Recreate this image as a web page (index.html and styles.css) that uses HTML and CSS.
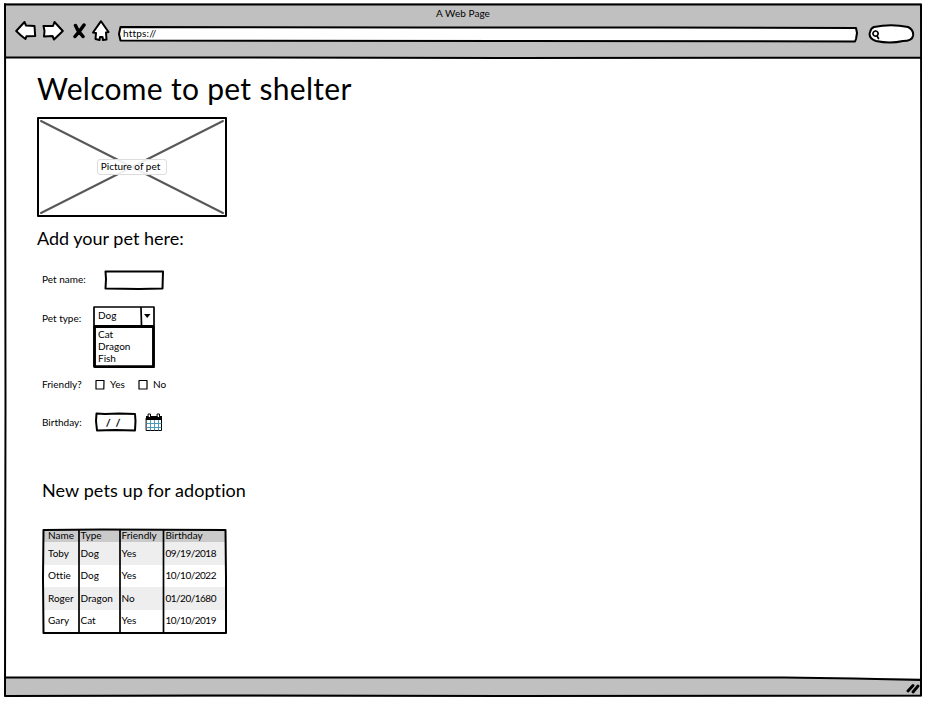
FILE: index.html
```html
<!DOCTYPE html>
<html lang="en">
<head>
<meta charset="utf-8">
<title>A Web Page</title>
<link rel="stylesheet" href="styles.css">
</head>
<body>
<div class="window">
  <svg class="frame" viewBox="0 0 918 694"><path d="M1 1.500L917 1.500L917.500 300L917 692.500L500 693L200 692.500L1 693L1.500 400L1 1M1 54.500L180 54.500L500 55L917 54.500M1 674.500L780 674.500L850 675.500L917 677"/></svg>
  <header class="chrome">
    <div class="title">A Web Page</div>
    <div class="toolbar">
      <svg class="icon back" viewBox="0 0 22 20"><path d="M1.200 10L9.500 1L11 4.500L19.500 5L20.200 15L11.500 15.200L10.500 18L6 14.500Z"/></svg>
      <svg class="icon forward" viewBox="0 0 22 20"><path d="M1.500 5L11 5L12.500 1L20.800 10L12 18.500L10.500 15L2 15.500L2.500 10Z"/></svg>
      <svg class="icon stop" viewBox="0 0 14 16"><path d="M3.500 2.500L6 7.500L11 13.500M12 2L8 7.500L3 13.500"/></svg>
      <svg class="icon home" viewBox="0 0 18 22"><path d="M9 1.200L16.500 12L14 12.500L14.500 19.500L11 20L10.500 17L8 17L7.500 20L3.500 19L4 13L1 12.500Z"/></svg>
      <div class="address">
        <svg class="frame" viewBox="0 0 740 20"><path fill="#fff" d="M2.500 3L300 3.500L540 3.500L738 4L739 9L738 15L737 17.500L400 17L2.500 16.500L1 10Z"/></svg>
        <span class="url">https://</span>
      </div>
      <div class="search">
        <svg class="frame" viewBox="0 0 48 20"><path fill="#fff" d="M6 3Q23-.5 40 3Q46 6 45 12Q44 17 35 17Q22 20 8 17Q0 14 2 8Q3 4 6 3Z"/><path class="lens" d="M7.500 7A2.600 2.600 0 1 0 7.600 7M9 12L10.500 14.500"/></svg>
      </div>
    </div>
  </header>
  <main class="content">
    <h1 class="heading">Welcome to pet shelter</h1>
    <figure class="picture">
      <svg class="frame" viewBox="0 0 190 100"><path d="M1 1H189V99H1Z"/><path class="cross" d="M4 4L186 96M186 4L4 96"/></svg>
      <figcaption class="caption">Picture of pet</figcaption>
    </figure>
    <h2 class="subheading add">Add your pet here:</h2>
    <form class="form">
      <div class="field name-field">
        <span class="label w-name">Pet name:</span>
        <div class="box name-box"><svg class="frame" viewBox="0 0 60 20"><path d="M1.500 1.500L30 1.500L59 1.500L58.500 18.500L35 19L1.500 18.500L2 9Z"/></svg></div>
      </div>
      <div class="field type-field">
        <span class="label w-type">Pet type:</span>
        <div class="select">
          <svg class="frame" viewBox="0 0 62 62"><path class="thin" d="M1 1H61V19.500M1 1V19.500M48 1.500L48.500 19"/><path class="ink" d="M51 8H57.500L54.200 12Z"/><path class="thick" d="M1.500 20.500H60.500V60.800L1.500 60.500Z"/></svg>
          <div class="selected">Dog</div>
          <ul class="options"><li>Cat</li><li>Dragon</li><li>Fish</li></ul>
        </div>
      </div>
      <div class="field friendly-field">
        <span class="label w-friendly">Friendly?</span>
        <svg class="check yes-check" viewBox="0 0 10 11"><path d="M1 1.500H9L8.800 10H1Z"/></svg><span class="yes">Yes</span>
        <svg class="check no-check" viewBox="0 0 10 11"><path d="M1 1.500H9V10H1Z"/></svg><span class="no">No</span>
      </div>
      <div class="field birthday-field">
        <span class="label w-birthday">Birthday:</span>
        <div class="box date-box"><svg class="frame" viewBox="0 0 42 20"><path d="M1.500 1.500L10 2L24 1.500L40 2L40.500 9L40 18.500L20 18L2 18.500L1 9Z"/></svg><span class="date">/&nbsp; /</span></div>
        <svg class="calendar" viewBox="0 0 18 19"><path fill="#fff" stroke="#000" stroke-width="1" d="M1.500 5H16.500V17.500H1.500Z"/><path d="M1 3H17V7H1Z"/><path class="grid" d="M5.500 7.500V17M9.500 7.500V17M13.500 7.500V17M2 10.500H16M2 14.500H16"/><path fill="#fff" stroke="#000" stroke-width="1" d="M3.500 1H5.500V4.500H3.500ZM12.500 1H14.500V4.500H12.500Z"/></svg>
      </div>
    </form>
    <h2 class="subheading adopt">New pets up for adoption</h2>
    <div class="pets">
      <table>
        <colgroup><col class="c-name"><col class="c-type"><col class="c-friendly"><col class="c-birthday"></colgroup>
        <thead><tr><th>Name</th><th>Type</th><th>Friendly</th><th>Birthday</th></tr></thead>
        <tbody>
          <tr><td>Toby</td><td>Dog</td><td>Yes</td><td class="day">09/19/2018</td></tr>
          <tr><td>Ottie</td><td>Dog</td><td>Yes</td><td class="day">10/10/2022</td></tr>
          <tr><td>Roger</td><td>Dragon</td><td>No</td><td class="day">01/20/1680</td></tr>
          <tr><td>Gary</td><td>Cat</td><td>Yes</td><td class="day">10/10/2019</td></tr>
        </tbody>
      </table>
      <svg class="frame" viewBox="0 0 185 106"><path d="M1.500 2L60 1.500L183.500 2L184 50V105L100 105L1.500 105L1 50Z"/><path class="thin" d="M37 2V104M78 2V104M121.500 2V104"/></svg>
    </div>
  </main>
  <footer class="status"><svg class="grip" viewBox="0 0 14 12"><path d="M2 9L7 3.500M7 10L12 4"/></svg></footer>
</div>
</body>
</html>
```

FILE: styles.css
```css
* { box-sizing: border-box; }
body {
  margin: 0;
  padding: 3px 0 0 4px;
  background: #fff;
  color: #000;
  font: 10px/12px Lato, "Liberation Sans", sans-serif;
  font-variant-ligatures: none;
}
svg { display: block; flex: none; fill: none; stroke: #000; stroke-width: 2; stroke-linejoin: round; stroke-linecap: round; }
.frame { position: absolute; left: 0; top: 0; width: 100%; height: 100%; pointer-events: none; }
.window { position: relative; width: 918px; height: 694px; display: flex; flex-direction: column; }
.chrome { height: 55px; background: #c0c0c0; padding-top: 4px; }
.title { text-align: center; letter-spacing: .05px; }
.toolbar { display: flex; align-items: center; height: 24px; padding-left: 11px; }
.icon { fill: #fff; }
.back, .forward { width: 22px; height: 20px; }
.forward { margin-left: 5px; }
.stop { width: 14px; height: 16px; margin-left: 8px; stroke-width: 3.500; }
.home { width: 18px; height: 22px; margin-left: 6px; }
.address { position: relative; width: 740px; height: 20px; margin: 5px 0 0 8px; padding: 3px 5px; }
.url { position: relative; letter-spacing: .2px; }
.search { position: relative; width: 48px; height: 20px; margin: 5px 0 0 10px; }
.lens { stroke-width: 1.700; }
.content { flex: 1; padding: 10px 0 0 33px; }
h1, h2 { margin: 0; font-weight: 400; white-space: nowrap; }
.heading { font-size: 30px; line-height: 40px; letter-spacing: .3px; }
.picture { position: relative; width: 190px; height: 100px; margin: 9px 0 0; display: flex; align-items: center; justify-content: center; }
.cross { stroke: #585858; }
.caption { position: relative; width: 70px; height: 16px; margin: 0 0 1px; padding-right: 3px; text-align: center; line-height: 13px; border: 1px solid #ddd; border-radius: 3px; background: rgba(255,255,255,.9); }
.subheading { font-size: 18px; line-height: 24px; }
.add { margin-top: 9px; }
.form { margin: 19px 0 0 5px; }
.field { display: flex; align-items: center; white-space: nowrap; }
.name-field { height: 22px; }
.box, .select { position: relative; flex: none; }
.name-box { width: 60px; height: 20px; }
.w-name { width: 62px; padding-bottom: 2px; }
.type-field { align-items: flex-start; height: 62px; margin-top: 15px; }
.w-type { width: 51px; padding-top: 6px; }
.select { width: 62px; height: 62px; }
.thin { stroke-width: 1.700; }
.thick { stroke-width: 2.900; }
.ink { fill: #000; stroke: none; }
.selected { height: 20px; padding: 3px 5px; }
.options { list-style: none; margin: 0; padding: 2px 5px; }
.friendly-field { height: 14px; margin-top: 9px; }
.w-friendly { width: 53px; }
.check { width: 10px; height: 11px; stroke-width: 1.2; }
.yes { width: 28px; margin-left: 5px; }
.no-check { margin-right: 5px; }
.birthday-field { height: 20px; margin-top: 21px; }
.w-birthday { width: 53px; }
.date-box { width: 42px; height: 20px; padding: 4px 11px; }
.date { -webkit-text-stroke: .3px #000; }
.calendar { width: 18px; height: 19px; margin-left: 8px; stroke: none; fill: #000; }
.grid { fill: none; stroke: #4a9ab8; stroke-width: 1; }
.adopt { margin: 46px 0 0 5px; letter-spacing: .1px; }
.pets { position: relative; width: 185px; height: 106px; margin: 26px 0 0 5px; padding: 1px; }
table { width: 183px; border-collapse: collapse; table-layout: fixed; white-space: nowrap; }
.c-name { width: 36px; }
.c-type { width: 41px; }
.c-friendly { width: 44px; }
th, td { padding: 0 0 0 1.500px; text-align: left; font-weight: 400; line-height: 12px; }
th:first-child, td:first-child { padding-left: 5px; }
th { height: 13px; padding-bottom: 1px; line-height: 11px; background: #cacaca; }
td { height: 22.500px; padding-bottom: 1px; }
.day { letter-spacing: -.5px; }
tbody tr:nth-child(odd) { background: #eee; }
.status { display: flex; justify-content: flex-end; align-items: center; height: 19px; background: #c0c0c0; }
.grip { width: 14px; height: 12px; margin-right: 2px; stroke-width: 2.900; }
```
